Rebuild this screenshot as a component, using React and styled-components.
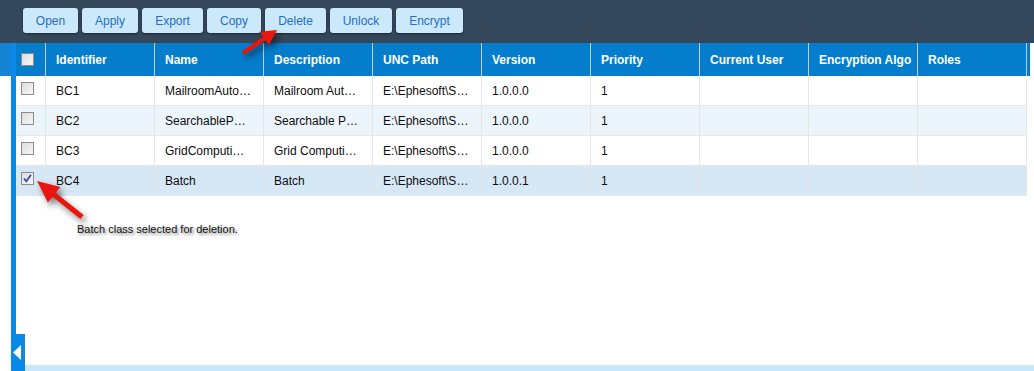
import React from "react";
import styled, { createGlobalStyle } from "styled-components";

const Global = createGlobalStyle`
  html, body, #root { height: 100%; }
  body { margin: 0; font-family: "Liberation Sans", Arial, sans-serif; background: #fff; overflow: hidden; }
  * { box-sizing: border-box; }
`;

const Page = styled.div`
  position: relative;
  height: 371px;
  width: 1034px;
  display: flex;
  flex-direction: column;
`;

const Toolbar = styled.div`
  height: 43px;
  background: #34475b;
  display: flex;
  align-items: flex-start;
  gap: 4px;
  padding: 8px 0 0 23px;
`;

const ToolButton = styled.button`
  height: 25px;
  width: ${(p) => p.$w}px;
  border: none;
  border-radius: 3px;
  background: #cce8fb;
  color: #1f6fc4;
  font: 12px "Liberation Sans", Arial, sans-serif;
  padding: 0;
  box-shadow: 0 1px 2px rgba(0, 0, 0, 0.45);
`;

const Content = styled.div`
  flex: 1;
  display: flex;
  min-height: 0;
`;

const Gutter = styled.div`
  width: 11px;
  display: flex;
  flex-direction: column;
`;

const GutterTop = styled.div`
  height: 33px;
  background: #1483d3;
`;

const Rail = styled.div`
  width: 5px;
  background: #0a8ae8;
`;

const Main = styled.div`
  flex: 1;
  display: flex;
  flex-direction: column;
`;

const Grid = styled.div`
  display: grid;
  grid-template-columns: 30px repeat(9, 109px);
  width: 1014px;
`;

const HeadCell = styled.div`
  height: 33px;
  background: #057dcd;
  color: #fff;
  font-weight: bold;
  font-size: 12px;
  display: flex;
  align-items: center;
  padding-left: ${(p) => (p.$box ? "5px" : "10px")};
  border-right: 1px solid #c3cdd8;
  ${(p) => p.$last && "box-shadow: 3px 0 0 #057dcd;"}
`;

const Cell = styled.div`
  height: 30px;
  background: ${(p) => (p.$sel ? "#d6e7f5" : p.$alt ? "#edf5fc" : "#fff")};
  color: #0d0d0d;
  font-size: 12px;
  display: flex;
  align-items: center;
  padding: 1px 6px 0 ${(p) => (p.$box ? "5px" : "10px")};
  border-right: 1px solid #e6e6e6;
  border-bottom: 1px solid #e6e6e6;
  white-space: nowrap;
`;

const Check = styled.span`
  width: 13px;
  height: 13px;
  border: 1px solid #8c8c8c;
  background: linear-gradient(135deg, #dcdcdc, #f7f7f7);
  position: relative;
  display: block;
  margin-top: ${(p) => (p.$head ? "0" : "-6px")};
`;

const Spacer = styled.div`
  flex: 1;
`;

const BottomBar = styled.div`
  height: 6px;
  background: #c9e7fb;
`;

const CollapseTab = styled.div`
  position: absolute;
  left: 11px;
  bottom: 0;
  width: 14px;
  height: 37px;
  background: #0a8ae8;
  display: flex;
  align-items: center;
  padding-left: 2px;
`;

const Overlay = styled.svg`
  position: absolute;
  left: 0;
  top: 0;
  pointer-events: none;
  overflow: visible;
`;

const Note = styled.div`
  position: absolute;
  left: 77px;
  top: 223px;
  font-size: 11px;
  color: #111;
  text-shadow: 2px 2px 3px rgba(0, 0, 0, 0.5);
  white-space: nowrap;
`;

function arrowPoints(tx, ty, sx, sy, head, hw, sw) {
  const dx = tx - sx, dy = ty - sy;
  const len = Math.hypot(dx, dy);
  const ux = dx / len, uy = dy / len;
  const px = -uy, py = ux;
  const bx = tx - ux * head, by = ty - uy * head;
  const pts = [
    [sx + px * sw, sy + py * sw],
    [bx + px * sw, by + py * sw],
    [bx + px * hw, by + py * hw],
    [tx, ty],
    [bx - px * hw, by - py * hw],
    [bx - px * sw, by - py * sw],
    [sx - px * sw, sy - py * sw],
  ];
  return pts.map((p) => p.map((v) => v.toFixed(1)).join(",")).join(" ");
}

const buttons = [
  ["Open", 55], ["Apply", 56], ["Export", 61], ["Copy", 54],
  ["Delete", 61], ["Unlock", 62], ["Encrypt", 67],
];

const headers = ["Identifier", "Name", "Description", "UNC Path", "Version", "Priority", "Current User", "Encryption Algo", "Roles"];

const rows = [
  ["BC1", "MailroomAuto…", "Mailroom Aut…", "E:\\Ephesoft\\S…", "1.0.0.0", "1"],
  ["BC2", "SearchableP…", "Searchable P…", "E:\\Ephesoft\\S…", "1.0.0.0", "1"],
  ["BC3", "GridComputi…", "Grid Computi…", "E:\\Ephesoft\\S…", "1.0.0.0", "1"],
  ["BC4", "Batch", "Batch", "E:\\Ephesoft\\S…", "1.0.0.1", "1"],
];

function CheckMark() {
  return (
    <svg width="11" height="11" viewBox="0 0 11 11" style={{ position: "absolute", left: 0, top: 0 }}>
      <path d="M2 5.5 L4.3 8.3 L9 1.8" fill="none" stroke="#3b4fa0" strokeWidth="1.8" />
    </svg>
  );
}

export default function App() {
  return (
    <Page>
      <Global />
      <Toolbar>
        {buttons.map(([t, w]) => (
          <ToolButton key={t} $w={w}>{t}</ToolButton>
        ))}
      </Toolbar>
      <Content>
        <Gutter>
          <GutterTop />
        </Gutter>
        <Rail />
        <Main>
          <Grid>
            <HeadCell $box><Check $head /></HeadCell>
            {headers.map((h, i) => (
              <HeadCell key={h} $last={i === headers.length - 1}>{h}</HeadCell>
            ))}
            {rows.map((r, ri) => {
              const sel = ri === 3;
              const alt = ri % 2 === 1;
              const cells = [...r, "", "", ""];
              return (
                <React.Fragment key={r[0]}>
                  <Cell $box $sel={sel} $alt={alt}>
                    <Check>{sel && <CheckMark />}</Check>
                  </Cell>
                  {cells.map((c, ci) => (
                    <Cell key={ci} $sel={sel} $alt={alt}>{c}</Cell>
                  ))}
                </React.Fragment>
              );
            })}
          </Grid>
          <Spacer />
          <BottomBar />
        </Main>
      </Content>
      <CollapseTab>
        <svg width="9" height="15" viewBox="0 0 9 15">
          <path d="M8 0 L8 15 L0 7.5 Z" fill="#fff" />
        </svg>
      </CollapseTab>
      <Overlay width="1034" height="371" style={{ filter: "drop-shadow(3px 4px 3px rgba(0,0,0,0.5))" }}>
        <polygon points={arrowPoints(277, 30, 243, 53, 15, 8, 2.2)} fill="#e8160c" />
        <polygon points={arrowPoints(37, 181, 82, 217, 22, 10, 2.5)} fill="#e8160c" />
      </Overlay>
      <Note>Batch class selected for deletion.</Note>
    </Page>
  );
}
